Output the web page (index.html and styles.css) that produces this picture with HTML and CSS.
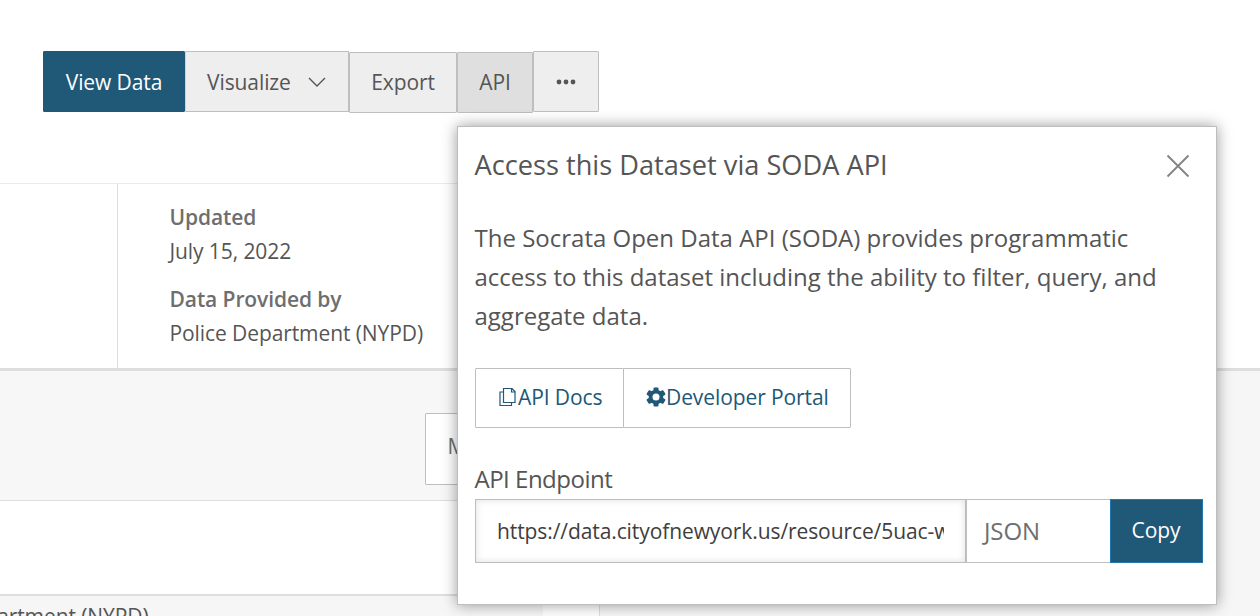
FILE: index.html
```html
<!DOCTYPE html>
<html lang="en">
<head>
<meta charset="utf-8">
<title>Dataset</title>
<link rel="stylesheet" href="styles.css">
</head>
<body>
<div class="page">
  <header class="toolbar">
    <div class="btn btn-primary">View Data</div>
    <div class="btn btn-visualize">Visualize
      <svg class="chevron" width="20" height="12" viewBox="0 0 20 12"><path d="M2 2l8 8 8-8" fill="none" stroke="#555" stroke-width="1.4"/></svg>
    </div>
    <div class="btn btn-low btn-export">Export</div>
    <div class="btn btn-low btn-active">API</div>
    <div class="btn btn-more">
      <svg width="20" height="6" viewBox="0 0 20 6"><g fill="#555"><circle cx="3" cy="3" r="2.4"/><circle cx="10" cy="3" r="2.4"/><circle cx="17" cy="3" r="2.4"/></g></svg>
    </div>
  </header>
  <section class="info">
    <div class="info-side"></div>
    <dl class="meta">
      <dt>Updated</dt>
      <dd>July 15, 2022</dd>
      <dt>Data Provided by</dt>
      <dd>Police Department (NYPD)</dd>
    </dl>
  </section>
  <main class="content">
    <div class="column">
      <div class="strip"><div class="more-box">M</div></div>
      <div class="blank"></div>
      <div class="row"><div class="row-label"><span class="row-text">Police Department (NYPD)</span></div></div>
    </div>
  </main>
</div>
<div class="flyout">
  <div class="flyout-head">
    <h2 class="title">Access this Dataset via SODA API</h2>
    <svg class="close" width="24" height="24" viewBox="0 0 24 24"><path d="M1.500 1.500l21 21M22.500 1.500l-21 21" fill="none" stroke="#828282" stroke-width="1.8"/></svg>
  </div>
  <p class="desc">The Socrata Open Data API (SODA) provides programmatic access to this dataset including the ability to filter, query, and aggregate data.</p>
  <div class="links">
    <a class="link link-docs"><svg width="18" height="20" viewBox="0 0 18 20"><path d="M4.500 1.500h8.500l3 3v11h-11.500zM12.500 1.500v3.500h3.500M4.500 5h-3.500v13.500h11.500v-3" fill="none" stroke="#205878" stroke-width="1.200"/></svg><span>API Docs</span></a>
    <a class="link link-portal"><svg width="20" height="20" viewBox="0 0 20 20"><g fill="#205878"><rect x="7.500" y="0.500" width="5" height="19" rx="1"/><rect x="7.300" y="0.300" width="5.400" height="19.400" rx="1" transform="rotate(60 10 10)"/><rect x="7.300" y="0.300" width="5.400" height="19.400" rx="1" transform="rotate(120 10 10)"/><circle cx="10" cy="10" r="7.300"/></g><circle cx="10" cy="10" r="3.500" fill="#fff"/></svg><span>Developer Portal</span></a>
  </div>
  <div class="label">API Endpoint</div>
  <div class="endpoint">
    <div class="url"><div class="url-text">https://data.cityofnewyork.us/resource/5uac-w</div></div>
    <div class="format">JSON</div>
    <div class="copy">Copy</div>
  </div>
</div>
</body>
</html>
```
FILE: styles.css
```css
* { box-sizing: border-box; }
body { margin: 0; font-family: "Open Sans", sans-serif; color: #555; font-size: 21px; letter-spacing: -0.09px; background: #fff; }
.page { height: 616px; overflow: hidden; display: flex; flex-direction: column; }
.toolbar { display: flex; align-items: flex-start; height: 183px; padding: 51px 0 0 43px; flex: none; }
.btn { height: 61px; border: 1px solid #bebebe; background: #eee; display: flex; align-items: center; border-radius: 1px; line-height: 32px; }
.btn-primary { width: 142px; justify-content: center; background: #205878; border-color: #205878; color: #fff; }
.btn-visualize { width: 164px; padding-left: 21px; border-left-color: #d2d2d2; }
.chevron { margin-left: 16px; }
.btn-low { margin-top: 1px; justify-content: center; padding-bottom: 2px; }
.btn-export { width: 108px; }
.btn-active { width: 76px; background: #dfdfdf; }
.btn-more { width: 66px; justify-content: center; }
.info { display: flex; height: 185px; width: 700px; flex: none; border-top: 1px solid #ebebeb; }
.info-side { width: 118px; border-right: 1px solid #dedede; }
.meta { margin: 0; padding: 16px 0 0 51.5px; line-height: 34px; }
.meta dt { font-weight: 600; color: #6e6e6e; }
.meta dd { margin: 0 0 14px; }
.content { flex: 1; background: #f6f6f6; border-top: 3px solid #dedede; }
.column { width: 600px; background: #fff; border-right: 1px solid #dedede; }
.strip { height: 130px; background: #f7f7f7; border-bottom: 1px solid #dedede; padding: 42px 0 0 425px; }
.more-box { width: 175px; height: 72px; border: 1px solid #bebebe; background: #fff; padding: 16px 21.5px; line-height: 32px; color: #6e6e6e; border-radius: 1px; }
.blank { height: 93px; }
.row { border-top: 2px solid #dedede; height: 30px; }
.row-label { width: 543px; height: 28px; background: #f6f6f6; overflow: hidden; display: flex; }
.row-text { margin-left: -105px; line-height: 41px; white-space: nowrap; }
.flyout { position: absolute; left: 457px; top: 126px; width: 760px; height: 479px; background: #fff; border: 1px solid #bebebe; box-shadow: 0 0 14px rgba(0,0,0,.4); padding: 0 13px 0 17px; }
.flyout-head { display: flex; justify-content: space-between; align-items: flex-start; padding: 18px 13px 0 0; height: 91px; }
.title { margin: 0 0 0 -0.5px; font-weight: 400; font-size: 27.2px; letter-spacing: 0; line-height: 39px; white-space: nowrap; }
.close { margin-top: 9px; }
.desc { margin: 0 0 0 -0.5px; font-size: 24px; letter-spacing: 0; line-height: 39px; height: 150px; }
.links { display: flex; height: 60px; color: #205878; line-height: 28px; }
.link { border: 1px solid #bebebe; display: flex; align-items: center; border-radius: 1px; padding-bottom: 2px; }
.link-docs { width: 149px; padding-left: 23px; }
.link-docs span { margin-left: 1px; }
.link-portal { width: 228px; margin-left: -1px; padding-left: 22px; }
.label { margin-top: 31px; font-size: 24px; letter-spacing: -0.5px; line-height: 39px; height: 40px; margin-left: -0.5px; }
.endpoint { display: flex; height: 64px; }
.url { width: 491px; border: 1px solid #bebebe; box-shadow: inset 0 0 7px rgba(0,0,0,.13); padding: 0 21px; color: #3e3e3e; line-height: 62px; }
.url-text { overflow: hidden; white-space: nowrap; }
.format { width: 144px; border: 1px solid #bebebe; border-right: 0; font-size: 24px; color: #6e6e6e; line-height: 62px; padding-left: 17px; }
.copy { width: 93px; background: #205878; border: 1px solid #1f78ad; color: #fff; text-align: center; line-height: 61px; padding-right: 1px; }
```
